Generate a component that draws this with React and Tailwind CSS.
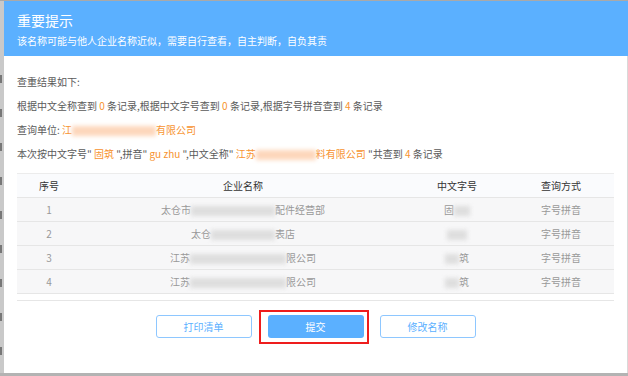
import React from 'react';

const font = { fontFamily: '"Noto Sans CJK SC", "Noto Sans", sans-serif' };

function Blur({ w, orange }) {
  return (
    <span
      className={`inline-block h-[10px] align-middle blur-[2px] ${orange ? 'bg-[#fdd7bb]' : 'bg-[#dedede]'}`}
      style={{ width: w }}
    />
  );
}

const rows = [
  { no: '1', name: <>太仓市<Blur w={84} />配件经营部</>, code: <>固<Blur w={16} /></>, way: '字号拼音' },
  { no: '2', name: <>太仓<Blur w={64} />表店</>, code: <Blur w={20} />, way: '字号拼音' },
  { no: '3', name: <>江苏<Blur w={96} />限公司</>, code: <><Blur w={14} />筑</>, way: '字号拼音' },
  { no: '4', name: <>江苏<Blur w={96} />限公司</>, code: <><Blur w={14} />筑</>, way: '字号拼音' },
];

export default function App() {
  return (
    <div className="w-[628px] h-[376px] flex flex-col bg-[#c6c6c6] overflow-hidden" style={font}>
      <div className="h-[1px] bg-[#a9a9a9]" />
      <div className="flex flex-1 min-h-0">
        {/* page behind the dialog */}
        <div className="w-[4px] flex flex-col gap-[26px] pt-[74px] bg-[#c9c9c9]">
          {[0, 1, 2, 3, 4, 5, 6, 7, 8].map((i) => (
            <div key={i} className="w-[2px] h-[8px] bg-[#777]" />
          ))}
        </div>

        {/* dialog */}
        <div className="flex-1 flex flex-col bg-white">
          <div className="h-[55px] bg-[#5bb0ff] px-[13px] pt-[8px] text-white">
            <div className="text-[14px] leading-[22px]">重要提示</div>
            <div className="text-[10px] leading-[16px] mt-[2px]">该名称可能与他人企业名称近似，需要自行查看，自主判断，自负其责</div>
          </div>

          <div className="flex-1 flex flex-col border-r border-[#d9d9d9] px-[13px] pt-[14px] text-[10px] text-[#5a5a5a]">
            <div className="leading-[24px]">查重结果如下:</div>
            <div className="leading-[24px]">
              根据中文全称查到 <span className="text-[#f7922e]">0</span> 条记录,根据中文字号查到 <span className="text-[#f7922e]">0</span> 条记录,根据字号拼音查到 <span className="text-[#f7922e]">4</span> 条记录
            </div>
            <div className="leading-[24px]">
              查询单位: <span className="text-[#f7922e]">江<Blur w={84} orange />有限公司</span>
            </div>
            <div className="leading-[24px]">
              本次按中文字号" <span className="text-[#f7922e]">固筑</span> ",拼音" <span className="text-[#f7922e]">gu zhu</span> ",中文全称" <span className="text-[#f7922e]">江苏<Blur w={60} orange />料有限公司</span> "共查到 <span className="text-[#f7922e]">4</span> 条记录
            </div>

            <div className="mt-[7px] border-t border-[#ececec]">
              <div className="grid grid-cols-[64px_324px_104px_104px] h-[24px] items-center bg-[#fafbfd] border-b border-[#e6e6e6] text-[#333] text-center">
                <div>序号</div>
                <div>企业名称</div>
                <div>中文字号</div>
                <div>查询方式</div>
              </div>
              {rows.map((r) => (
                <div key={r.no} className="grid grid-cols-[64px_324px_104px_104px] h-[24px] items-center bg-[#f7f7f8] border-b border-[#e6e6e6] text-[#999] text-center">
                  <div>{r.no}</div>
                  <div>{r.name}</div>
                  <div>{r.code}</div>
                  <div>{r.way}</div>
                </div>
              ))}
            </div>

            <div className="mt-[6px] h-[1px] bg-[#e6e6e6]" />

            <div className="mt-[14px] flex justify-center gap-[16px] text-[10px]">
              <button className="w-[96px] h-[23px] rounded-[3px] border border-[#8ec7ff] text-[#5bb0ff] bg-white">打印清单</button>
              <div className="relative">
                <button className="w-[96px] h-[23px] rounded-[3px] bg-[#5bb0ff] text-white">提交</button>
                <div className="absolute left-[-9px] top-[-5px] w-[110px] h-[34px] border-2 border-[#ee1d1d]" />
              </div>
              <button className="w-[96px] h-[23px] rounded-[3px] border border-[#8ec7ff] text-[#5bb0ff] bg-white">修改名称</button>
            </div>
          </div>
        </div>
      </div>
      <div className="h-[3px] bg-[#b3b3b3]" />
    </div>
  );
}
